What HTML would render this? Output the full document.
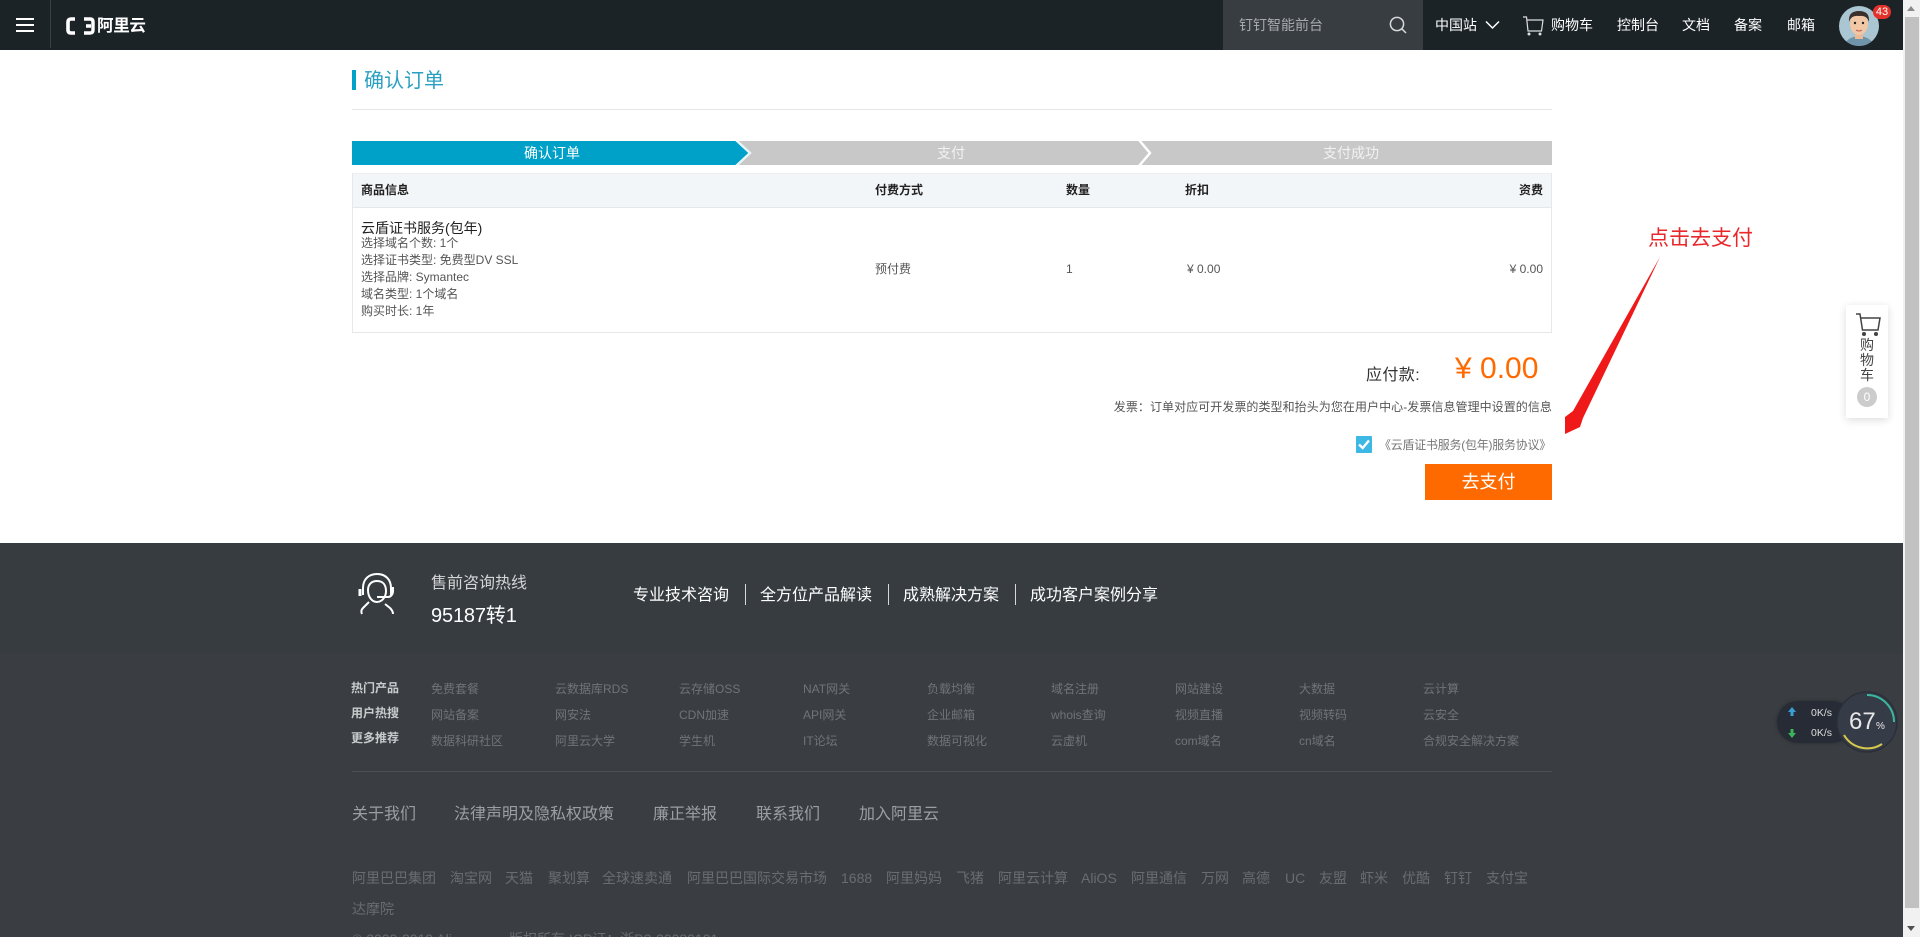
<!DOCTYPE html>
<html lang="zh-CN"><head><meta charset="utf-8"><title>确认订单</title>
<style>
*{box-sizing:border-box}
html,body{margin:0;padding:0;width:1920px;height:937px;overflow:hidden;background:#fff}
body{position:relative;font-family:"Liberation Sans","Noto Sans CJK SC",sans-serif;font-size:12px;color:#555}
.a{position:absolute}
.t{position:absolute;white-space:nowrap;line-height:20px;height:20px}
.w{color:#fff;font-size:14px}
.b{font-weight:700;color:#222;font-size:12px}
.l{color:#555;font-size:12px}
.g{color:#6f7478;font-size:12px}
.h{color:#c9cbcc;font-size:12px;font-weight:700}
.k{color:#9c9fa1;font-size:16px}
.m{color:#686d71;font-size:14px}
.s{color:#fff;font-size:16px}
</style></head><body>
<!-- header -->
<div class="a" style="left:0;top:0;width:1903px;height:50px;background:#1c2327"></div>
<div class="a" style="left:16px;top:18px;width:18px;height:2px;background:#fff"></div>
<div class="a" style="left:16px;top:24px;width:18px;height:2px;background:#fff"></div>
<div class="a" style="left:16px;top:30px;width:18px;height:2px;background:#fff"></div>
<div class="a" style="left:50px;top:0;width:1px;height:48px;background:#3a4145"></div>
<svg class="a" style="left:64px;top:16px" width="34" height="20" viewBox="0 0 34 20"><path d="M11 3H7Q4 3 4 6V14Q4 17 7 17H11" fill="none" stroke="#fff" stroke-width="3.6"/><path d="M20 3H26Q29 3 29 6V14Q29 17 26 17H20M22 10H27" fill="none" stroke="#fff" stroke-width="3.4"/></svg>
<div class="t" style="left:97px;top:16px;color:#fff;font-size:16.5px;font-weight:700;letter-spacing:-.3px">阿里云</div>
<div class="a" style="left:1223px;top:0;width:200px;height:50px;background:#373d41"></div>
<div class="t" style="left:1239px;top:15px;color:#a8abad;font-size:14px">钉钉智能前台</div>
<svg class="a" style="left:1388px;top:15px" width="20" height="20" viewBox="0 0 20 20" fill="none" stroke="#d8d8d8" stroke-width="1.5"><circle cx="9" cy="9" r="6.6"/><path d="M13.8 13.8L18 18"/></svg>
<div class="t w" style="left:1435px;top:15px">中国站</div>
<svg class="a" style="left:1484px;top:19px" width="17" height="12" viewBox="0 0 17 12" fill="none" stroke="#fff" stroke-width="1.5"><path d="M2 2.5L8.5 9L15 2.5"/></svg>
<svg class="a" style="left:1523px;top:16px" width="21" height="20" viewBox="0 0 21 20" fill="none" stroke="#ddd" stroke-width="1.2"><path d="M0 1H3.5L5 15H18.5L20 4H4"/><circle cx="6" cy="18" r=".9" fill="#ddd"/><circle cx="17" cy="18" r=".9" fill="#ddd"/></svg>
<div class="t w" style="left:1551px;top:15px">购物车</div>
<div class="t w" style="left:1617px;top:15px">控制台</div>
<div class="t w" style="left:1682px;top:15px">文档</div>
<div class="t w" style="left:1734px;top:15px">备案</div>
<div class="t w" style="left:1787px;top:15px">邮箱</div>
<svg class="a" style="left:1838px;top:5px" width="42" height="42" viewBox="0 0 42 42"><defs><clipPath id="c"><circle cx="21" cy="21" r="20"/></clipPath></defs><circle cx="21" cy="21" r="20" fill="#abc6d3"/><g clip-path="url(#c)"><path d="M6 42Q8 32 21 31Q34 32 36 42Z" fill="#6f93a8"/><rect x="17" y="25" width="8" height="9" fill="#eab995"/><ellipse cx="21" cy="19" rx="9" ry="11" fill="#f2c7a5"/><path d="M11 17Q10 6 21 6Q32 6 31 17Q29 10 21 11Q13 10 11 17Z" fill="#3a2f2b"/><circle cx="17" cy="18" r="1.2" fill="#222"/><circle cx="25" cy="18" r="1.2" fill="#222"/><path d="M18 25Q21 27 24 25" stroke="#b55" fill="none"/></g></svg>
<div class="a" style="left:1873px;top:5px;width:18px;height:14px;border-radius:7px;background:#e4322b;color:#fff;font-size:11px;line-height:14px;text-align:center">43</div>
<!-- title -->
<div class="a" style="left:352px;top:70px;width:4px;height:20px;background:#00a2ca"></div>
<div class="t" style="left:364px;top:71px;color:#2a9fc0;font-size:20px">确认订单</div>
<div class="a" style="left:352px;top:109px;width:1200px;height:1px;background:#e6e6e6"></div>
<!-- steps -->
<svg class="a" style="left:352px;top:141px" width="1200" height="24" viewBox="0 0 1200 24"><rect width="1200" height="24" fill="#c8c8c8"/><path d="M0 0H384L398 12L384 24H0Z" fill="#00a1c9"/><path d="M384-1L398 12L384 25" fill="none" stroke="#e8f6fa" stroke-width="2.4"/><path d="M787-1L798 12L787 25" fill="none" stroke="#fff" stroke-width="2.4"/></svg>
<div class="t" style="left:524px;top:143px;color:#fff;font-size:14px">确认订单</div>
<div class="t" style="left:937px;top:143px;color:#f2f2f2;font-size:14px">支付</div>
<div class="t" style="left:1323px;top:143px;color:#f2f2f2;font-size:14px">支付成功</div>
<!-- table -->
<div class="a" style="left:352px;top:173px;width:1200px;height:160px;border:1px solid #e8e8e8;border-top-color:#eceef0"></div>
<div class="a" style="left:353px;top:174px;width:1198px;height:34px;background:#f3f6f9;border-bottom:1px solid #e4e8ec"></div>
<div class="t b" style="left:361px;top:180px">商品信息</div>
<div class="t b" style="left:875px;top:180px">付费方式</div>
<div class="t b" style="left:1066px;top:180px">数量</div>
<div class="t b" style="left:1185px;top:180px">折扣</div>
<div class="t b" style="right:377px;top:180px">资费</div>
<div class="t" style="left:361px;top:218px;font-size:14px;color:#222">云盾证书服务(包年)</div>
<div class="t l" style="left:361px;top:233px">选择域名个数: 1个</div>
<div class="t l" style="left:361px;top:250px">选择证书类型: 免费型DV SSL</div>
<div class="t l" style="left:361px;top:267px">选择品牌: Symantec</div>
<div class="t l" style="left:361px;top:284px">域名类型: 1个域名</div>
<div class="t l" style="left:361px;top:301px">购买时长: 1年</div>
<div class="t l" style="left:875px;top:259px">预付费</div>
<div class="t l" style="left:1066px;top:259px">1</div>
<div class="t l" style="left:1187px;top:259px">¥ 0.00</div>
<div class="t l" style="right:377px;top:259px">¥ 0.00</div>
<!-- total -->
<div class="t" style="left:1366px;top:366px;font-size:16px;color:#333;letter-spacing:.4px">应付款:</div>
<div class="t" style="left:1455px;top:349px;height:40px;line-height:40px;font-size:30px;color:#ff6a00">¥ 0.00</div>
<div class="t l" style="right:368px;top:397px;letter-spacing:.06px">发票：订单对应可开发票的类型和抬头为您在用户中心-发票信息管理中设置的信息</div>
<svg class="a" style="left:1356px;top:436px" width="16" height="17" viewBox="0 0 16 17"><rect width="16" height="17" rx="1" fill="#3db7e4"/><path d="M3 8.5L6.7 12L13 4.5" fill="none" stroke="#fff" stroke-width="2.4"/></svg>
<div class="t" style="left:1379px;top:435px;font-size:12px;color:#777;letter-spacing:-.25px">《云盾证书服务(包年)服务协议》</div>
<div class="a" style="left:1425px;top:464px;width:127px;height:36px;background:#ff6a00;color:#fff;font-size:18px;line-height:36px;text-align:center">去支付</div>
<!-- annotation -->
<div class="t" style="left:1648px;top:229px;font-size:21px;color:#e8282b">点击去支付</div>
<svg class="a" style="left:1550px;top:250px" width="120" height="190" viewBox="0 0 120 190"><path d="M110 7L23 161L15 167L15 184L30 177L33 168Z" fill="#f01919"/></svg>
<!-- cart float -->
<div class="a" style="left:1846px;top:305px;width:42px;height:113px;background:#fff;box-shadow:0 2px 8px rgba(0,0,0,.14)"></div>
<svg class="a" style="left:1854px;top:312px" width="28" height="26" viewBox="0 0 28 26" fill="none" stroke="#444" stroke-width="1.5"><path d="M2 2H6L8.5 18H24L26 6H7"/><circle cx="10" cy="22" r="1.3" fill="#444"/><circle cx="22" cy="22" r="1.3" fill="#444"/></svg>
<div class="a" style="left:1846px;top:338px;width:42px;text-align:center;color:#444;font-size:14px;line-height:15px">购<br>物<br>车</div>
<div class="a" style="left:1857px;top:387px;width:20px;height:20px;border-radius:50%;background:#ccc;color:#fff;font-size:12px;line-height:20px;text-align:center">0</div>
<!-- footer -->
<div class="a" style="left:0;top:543px;width:1903px;height:110px;background:#373c40"></div>
<div class="a" style="left:0;top:653px;width:1903px;height:284px;background:#3a3e43"></div>
<svg class="a" style="left:356px;top:571px" width="42" height="46" viewBox="0 0 42 46" fill="none" stroke="#fff" stroke-width="2"><path d="M7 24V17C7 8 13 3 21 3C29 3 35 8 35 17V24"/><path d="M12 19C12 13 16 10 21 10C27 10 30 14 30 20C30 26 26 31 21 31C16 31 12 26 12 19Z"/><path d="M21 26H32C35 26 37 23 37 20V16"/><path d="M13 31L7 37C5 39 5 41 6 43"/><path d="M29 33L34 37C36 39 37 41 37 43"/><path d="M4 18V25" stroke-width="3"/></svg>
<div class="t" style="left:431px;top:574px;color:#d4d5d6;font-size:16px">售前咨询热线</div>
<div class="t" style="left:431px;top:606px;color:#fff;font-size:20px;letter-spacing:-.15px">95187转1</div>
<div class="t s" style="left:633px;top:586px">专业技术咨询</div>
<div class="a" style="left:745px;top:584px;width:1px;height:21px;background:#d8d8d8"></div>
<div class="t s" style="left:760px;top:586px">全方位产品解读</div>
<div class="a" style="left:888px;top:584px;width:1px;height:21px;background:#d8d8d8"></div>
<div class="t s" style="left:903px;top:586px">成熟解决方案</div>
<div class="a" style="left:1015px;top:584px;width:1px;height:21px;background:#d8d8d8"></div>
<div class="t s" style="left:1030px;top:586px">成功客户案例分享</div>
<!-- grid -->
<div class="t h" style="left:351px;top:678px">热门产品</div>
<div class="t h" style="left:351px;top:703px">用户热搜</div>
<div class="t h" style="left:351px;top:728px">更多推荐</div>
<div class="t g" style="left:431px;top:679px">免费套餐</div><div class="t g" style="left:555px;top:679px">云数据库RDS</div><div class="t g" style="left:679px;top:679px">云存储OSS</div><div class="t g" style="left:803px;top:679px">NAT网关</div><div class="t g" style="left:927px;top:679px">负载均衡</div><div class="t g" style="left:1051px;top:679px">域名注册</div><div class="t g" style="left:1175px;top:679px">网站建设</div><div class="t g" style="left:1299px;top:679px">大数据</div><div class="t g" style="left:1423px;top:679px">云计算</div>
<div class="t g" style="left:431px;top:705px">网站备案</div><div class="t g" style="left:555px;top:705px">网安法</div><div class="t g" style="left:679px;top:705px">CDN加速</div><div class="t g" style="left:803px;top:705px">API网关</div><div class="t g" style="left:927px;top:705px">企业邮箱</div><div class="t g" style="left:1051px;top:705px">whois查询</div><div class="t g" style="left:1175px;top:705px">视频直播</div><div class="t g" style="left:1299px;top:705px">视频转码</div><div class="t g" style="left:1423px;top:705px">云安全</div>
<div class="t g" style="left:431px;top:731px">数据科研社区</div><div class="t g" style="left:555px;top:731px">阿里云大学</div><div class="t g" style="left:679px;top:731px">学生机</div><div class="t g" style="left:803px;top:731px">IT论坛</div><div class="t g" style="left:927px;top:731px">数据可视化</div><div class="t g" style="left:1051px;top:731px">云虚机</div><div class="t g" style="left:1175px;top:731px">com域名</div><div class="t g" style="left:1299px;top:731px">cn域名</div><div class="t g" style="left:1423px;top:731px">合规安全解决方案</div>
<div class="a" style="left:352px;top:771px;width:1200px;height:1px;background:#4c5055"></div>
<div class="t k" style="left:352px;top:805px">关于我们</div><div class="t k" style="left:454px;top:805px">法律声明及隐私权政策</div><div class="t k" style="left:653px;top:805px">廉正举报</div><div class="t k" style="left:756px;top:805px">联系我们</div><div class="t k" style="left:859px;top:805px">加入阿里云</div>
<div class="t m" style="left:352px;top:868px">阿里巴巴集团</div><div class="t m" style="left:450px;top:868px">淘宝网</div><div class="t m" style="left:505px;top:868px">天猫</div><div class="t m" style="left:548px;top:868px">聚划算</div><div class="t m" style="left:602px;top:868px">全球速卖通</div><div class="t m" style="left:687px;top:868px">阿里巴巴国际交易市场</div><div class="t m" style="left:841px;top:868px">1688</div><div class="t m" style="left:886px;top:868px">阿里妈妈</div><div class="t m" style="left:956px;top:868px">飞猪</div><div class="t m" style="left:998px;top:868px">阿里云计算</div><div class="t m" style="left:1081px;top:868px">AliOS</div><div class="t m" style="left:1131px;top:868px">阿里通信</div><div class="t m" style="left:1201px;top:868px">万网</div><div class="t m" style="left:1242px;top:868px">高德</div><div class="t m" style="left:1285px;top:868px">UC</div><div class="t m" style="left:1319px;top:868px">友盟</div><div class="t m" style="left:1360px;top:868px">虾米</div><div class="t m" style="left:1402px;top:868px">优酷</div><div class="t m" style="left:1444px;top:868px">钉钉</div><div class="t m" style="left:1486px;top:868px">支付宝</div>
<div class="t m" style="left:352px;top:899px">达摩院</div>
<div class="t m" style="left:352px;top:929px">© 2009-2019 Ali</div><div class="t m" style="left:509px;top:929px">版权所有 ICP证：浙B2-20080101</div>
<!-- speed widget -->
<div class="a" style="left:1777px;top:701px;width:76px;height:42px;border-radius:21px;background:#262b35;box-shadow:0 0 4px rgba(0,0,0,.3)"></div>
<svg class="a" style="left:1786px;top:705px" width="12" height="34" viewBox="0 0 12 34"><path d="M6 2L10 7H7.5V11H4.5V7H2Z" fill="#3a9fd6"/><path d="M6 33L10 28H7.5V24H4.5V28H2Z" fill="#3bb35a"/></svg>
<div class="t" style="left:1811px;top:703px;color:#ddd;font-size:10.5px">0K/s</div>
<div class="t" style="left:1811px;top:723px;color:#ddd;font-size:10.5px">0K/s</div>
<svg class="a" style="left:1836px;top:691px" width="62" height="62" viewBox="0 0 62 62"><circle cx="31" cy="31" r="30" fill="#363b48" stroke="#2a2f38" stroke-width="1.5"/><path d="M31 4A27 27 0 0 1 58 31" fill="none" stroke="#3ab8a0" stroke-width="2"/><path d="M8 44A27 27 0 0 0 46 53" fill="none" stroke="#d7c94a" stroke-width="2"/></svg>
<div class="t" style="left:1849px;top:712px;color:#e8e8e8;font-size:24px;font-weight:300">67</div>
<div class="t" style="left:1876px;top:717px;color:#e8e8e8;font-size:10px">%</div>
<!-- scrollbar -->
<div class="a" style="left:1903px;top:0;width:17px;height:937px;background:#f1f1f1"></div>
<div class="a" style="left:1905px;top:17px;width:14px;height:891px;background:#c1c1c1"></div>
<div class="a" style="left:1907px;top:6px;width:0;height:0;border-left:4px solid transparent;border-right:4px solid transparent;border-bottom:5px solid #8a8a8a"></div>
<div class="a" style="left:1907px;top:926px;width:0;height:0;border-left:4px solid transparent;border-right:4px solid transparent;border-top:5px solid #505050"></div>
</body></html>
